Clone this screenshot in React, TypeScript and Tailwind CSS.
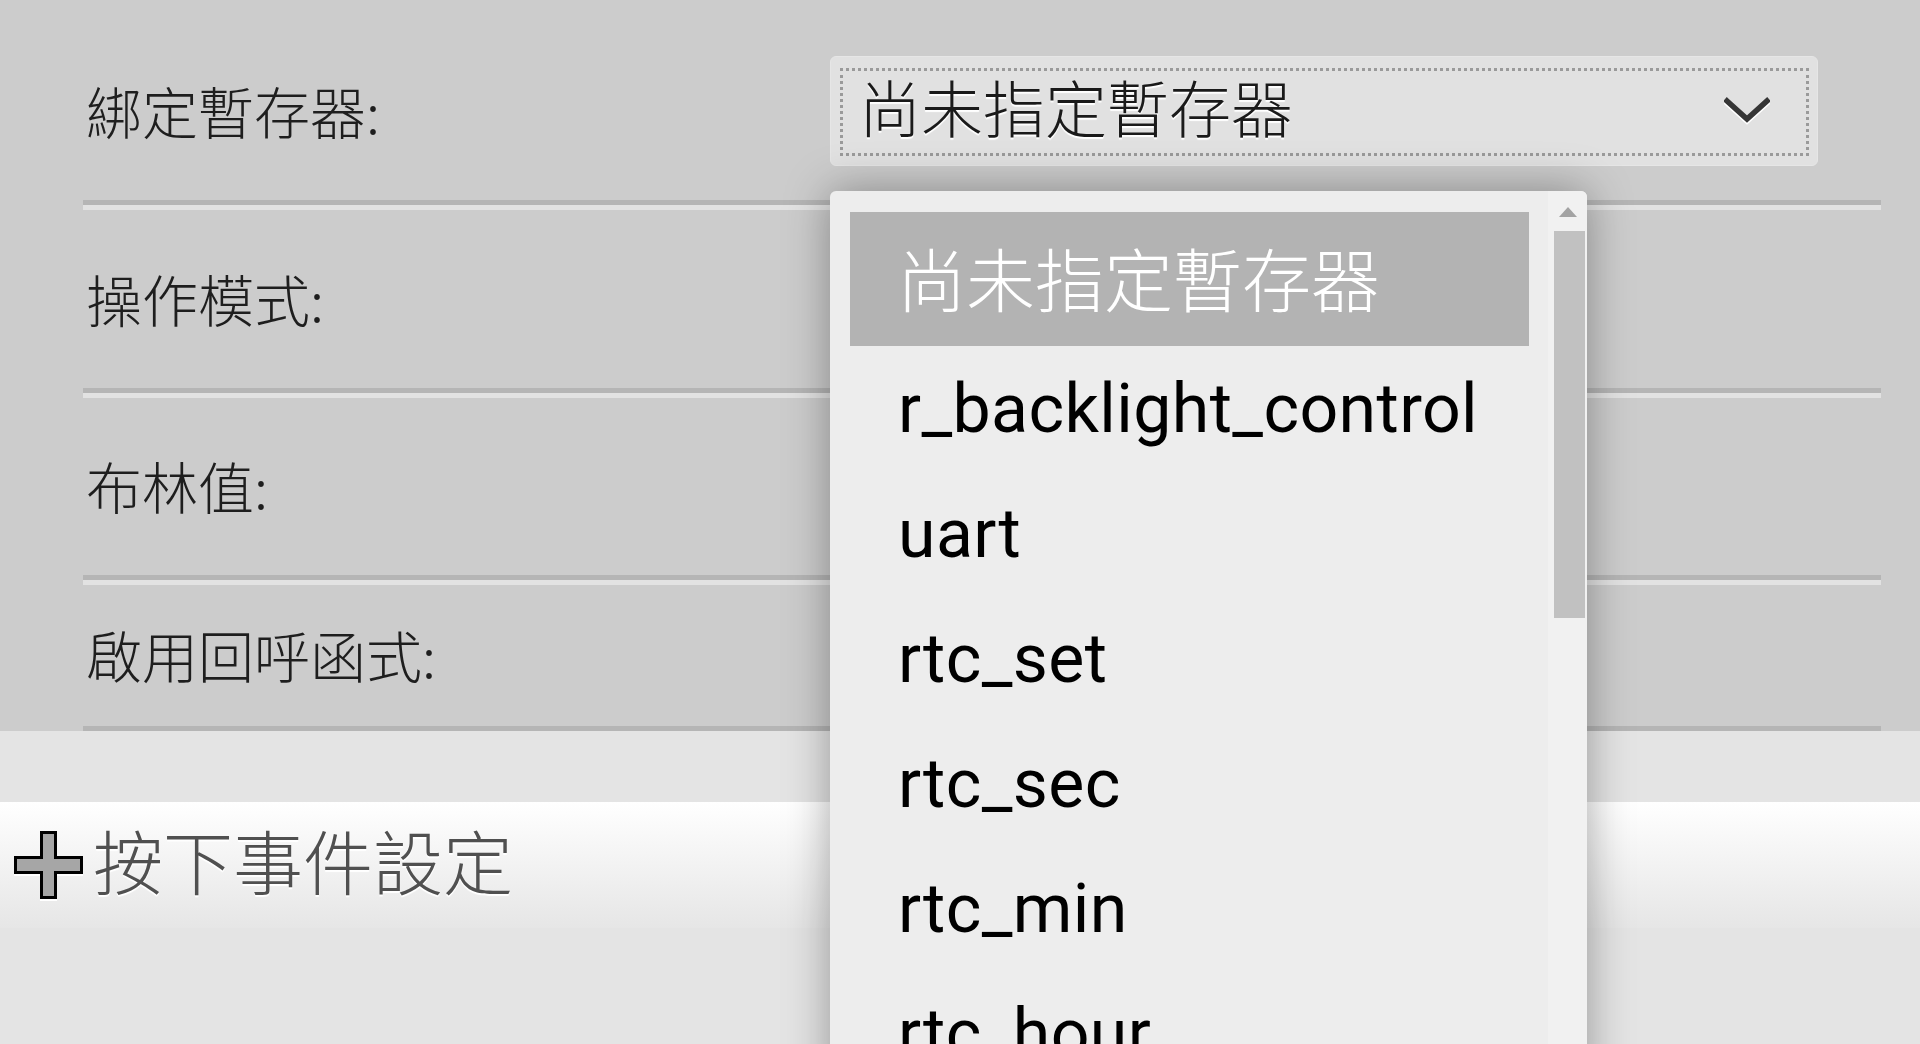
import React from "react";

const FONT = "font-['Roboto','Noto_Sans_CJK_TC',sans-serif]";
const CJK = "font-['Noto_Sans_CJK_TC','Roboto',sans-serif] font-light";

function Separator({ light = true }: { light?: boolean }) {
  return (
    <div>
      <div className="h-[5px] bg-[#b5b5b5]" />
      {light && <div className="h-[5px] bg-[#e2e2e2]" />}
    </div>
  );
}

function Row({
  label,
  className,
  children,
}: {
  label: string;
  className: string;
  children?: React.ReactNode;
}) {
  return (
    <div className={`flex items-center ${className}`}>
      <div className={`w-[747px] pl-[3px] pb-[3px] text-[56px] leading-none text-[#1e1e1e] ${CJK}`}>{label}</div>
      <div className="flex-1">{children}</div>
    </div>
  );
}

function Chevron() {
  return (
    <svg width="46" height="30" viewBox="0 0 46 30" className="drop-shadow-[0_2px_0_#ffffff]">
      <polyline points="3,4 23,22 43,4" fill="none" stroke="#363636" strokeWidth="5.5" strokeLinecap="square" />
    </svg>
  );
}

function PlusIcon() {
  return (
    <svg width="69" height="68" viewBox="0 0 69 68" className="drop-shadow-[0_2px_0_#ffffff]">
      <path
        d="M27.5,1.5 H41.5 V26.5 H67.5 V41.5 H41.5 V66.5 H27.5 V41.5 H1.5 V26.5 H27.5 Z"
        fill="#a6a6a6"
        stroke="#000"
        strokeWidth="3"
      />
    </svg>
  );
}

const items = ["r_backlight_control", "uart", "rtc_set", "rtc_sec", "rtc_min", "rtc_hour"];

export default function App() {
  return (
    <div className={`relative w-[1920px] h-[1044px] overflow-hidden bg-[#e4e4e4] ${FONT}`}>
      <div className="bg-[#cccccc] pl-[83px] pr-[39px]">
        <Row label="綁定暫存器:" className="h-[200px] pt-[22px]">
          <div className="w-[988px] h-[110px] rounded-[6px] bg-[#e1e1e1] border border-[#e6e6e6] pl-[9px] pr-[8px] pt-[11px] pb-[9px]">
            <div className="h-full border-[3px] border-dotted border-[#9a9a9a] flex items-center justify-between pl-[16px] pr-[36px]">
              <span className={`pb-[12px] text-[62px] leading-none text-[#1a1a1a] [text-shadow:0_2px_1px_#ffffff] ${CJK}`}>尚未指定暫存器</span>
              <Chevron />
            </div>
          </div>
        </Row>
        <Separator />
        <Row label="操作模式:" className="h-[178px]" />
        <Separator />
        <Row label="布林值:" className="h-[177px]" />
        <Separator />
        <Row label="啟用回呼函式:" className="h-[141px]" />
        <Separator light={false} />
      </div>
      <div className="h-[71px]" />
      <div className="h-[126px] bg-gradient-to-b from-[#ffffff] to-[#e6e6e6] flex items-center pl-[14px]">
        <PlusIcon />
        <span className={`ml-[10px] pb-[10px] text-[70px] leading-none text-[#505050] [text-shadow:0_2px_1px_#ffffff] ${CJK}`}>按下事件設定</span>
      </div>

      <div className="absolute left-[830px] top-[191px] w-[757px] h-[900px] rounded-t-[6px] bg-[#ededed] shadow-[0_0_45px_rgba(0,0,0,0.35)] flex overflow-hidden">
        <div className="w-[718px] pl-[20px] pt-[21px]">
          <div className="w-[679px]">
            <div className={`h-[134px] bg-[#b3b3b3] flex items-center pl-[47px] pb-[4px] text-[69px] leading-none text-white ${CJK}`}>
              尚未指定暫存器
            </div>
            {items.map((it) => (
              <div key={it} className="h-[125px] flex items-center pl-[48px] text-[68px] leading-none tracking-[0.4px] text-black">
                {it}
              </div>
            ))}
          </div>
        </div>
        <div className="w-[39px] bg-[#f1f1f1] flex flex-col items-center">
          <div className="mt-[16px] w-0 h-0 border-l-[9px] border-r-[9px] border-b-[10px] border-l-transparent border-r-transparent border-b-[#a3a3a3]" />
          <div className="mt-[14px] ml-[3px] w-[31px] h-[387px] bg-[#c1c1c1]" />
        </div>
      </div>
    </div>
  );
}
